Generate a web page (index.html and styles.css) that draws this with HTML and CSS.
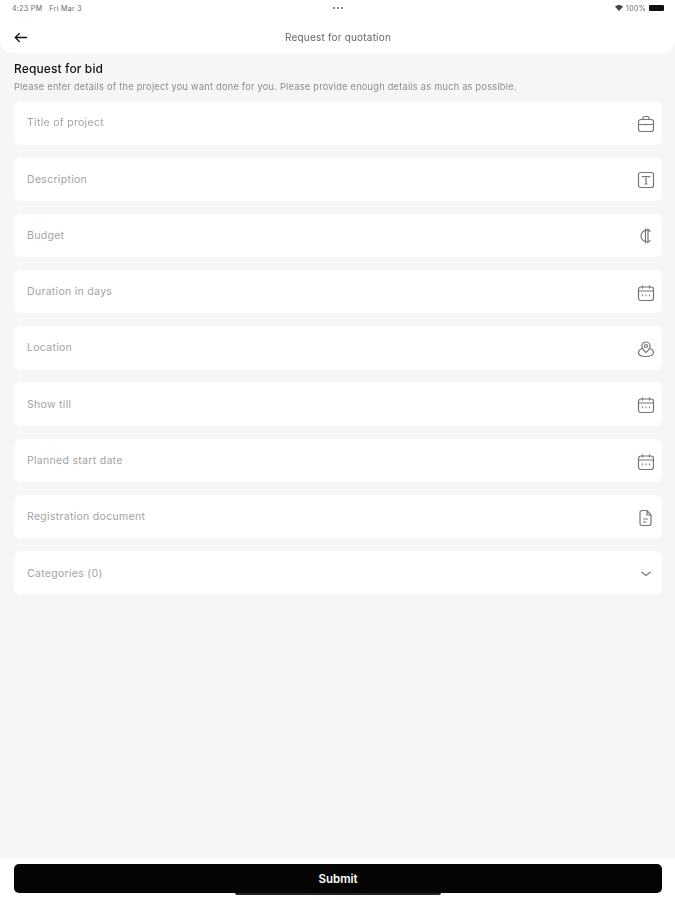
FILE: index.html
```html
<!DOCTYPE html>
<html lang="en">
<head>
    <meta charset="UTF-8">
    <meta name="viewport" content="width=device-width, initial-scale=1.0">
    <title>Request for quotation</title>
    <link rel="stylesheet" href="styles.css">
</head>
<body>
    <header class="top">
        <div class="status">
            <div class="status-time">4:23 PM&nbsp;&nbsp; Fri Mar 3</div>
            <div class="status-dots"><span></span><span></span><span></span></div>
            <div class="status-right">
                <svg class="wifi" viewBox="0 0 12 9"><path d="M6 9 0 2.6C3.5-.8 8.500-.8 12 2.600z"/></svg>
                <span>100%</span>
                <span class="battery"></span>
            </div>
        </div>
        <div class="nav">
            <svg class="back" viewBox="0 0 16 12"><path d="M15 6H2M6.500 1 1.500 6l5 5"/></svg>
            <div class="nav-title">Request for quotation</div>
        </div>
    </header>

    <main>
        <h1>Request for bid</h1>
        <p class="intro">Please enter details of the project you want done for you. Please provide enough details as much as possible.</p>

        <div class="fields">
            <div class="field">
                <span>Title of project</span>
                <svg class="icon" viewBox="0 0 18 18"><rect x="1.500" y="4.500" width="15" height="12" rx="2.500"/><path d="M6 4.500V3a1.500 1.500 0 0 1 1.500-1.500h3A1.500 1.500 0 0 1 12 3v1.500M1.500 9.500h15M9 10.500v.5"/></svg>
            </div>
            <div class="field">
                <span>Description</span>
                <svg class="icon" viewBox="0 0 18 18"><rect x="1.500" y="1.500" width="15" height="15" rx="2"/><path d="M5.500 6.500V5.500h7v1M9 5.500v7.500M7.500 13h3"/></svg>
            </div>
            <div class="field">
                <span>Budget</span>
                <svg class="icon" viewBox="0 0 18 18"><path d="M13.500 4.500A5.800 5.800 0 1 0 13.500 13.500M8.500 1.500v15M11 1.500v15"/></svg>
            </div>
            <div class="field">
                <span>Duration in days</span>
                <svg class="icon" viewBox="0 0 18 18"><use href="#cal"/></svg>
            </div>
            <div class="field">
                <span>Location</span>
                <svg class="icon" viewBox="0 0 18 18"><path d="M5 8.500C2.800 9.500 1.500 10.800 1.500 12.500c0 2.500 3 4 7.500 4s7.500-1.500 7.500-4c0-1.700-1.300-3-3.500-4"/><path d="M9 12.500C6.500 10.500 5 8.500 5 6a4 4 0 0 1 8 0c0 2.500-1.500 4.500-4 6.500z"/><circle cx="9" cy="6" r="1.500"/></svg>
            </div>
            <div class="field">
                <span>Show till</span>
                <svg class="icon" viewBox="0 0 18 18"><use href="#cal"/></svg>
            </div>
            <div class="field">
                <span>Planned start date</span>
                <svg class="icon" viewBox="0 0 18 18"><use href="#cal"/></svg>
            </div>
            <div class="field">
                <span>Registration document</span>
                <svg class="icon" viewBox="0 0 18 18"><path d="M5 1.500h5l4 4.500v8.500a2 2 0 0 1-2 2H5a2 2 0 0 1-2-2v-11a2 2 0 0 1 2-2zM10 1.500V6h4M6 10h5M6 13h3.500"/></svg>
            </div>
            <div class="field">
                <span>Categories (0)</span>
                <svg class="icon chev" viewBox="0 0 18 18"><path d="M4.500 7 9 10.500 13.500 7"/></svg>
            </div>
        </div>
    </main>

    <footer class="bottom">
        <button class="submit">Submit</button>
        <div class="home"></div>
    </footer>

    <svg class="defs" width="0" height="0">
        <symbol id="cal" viewBox="0 0 18 18">
            <rect x="1.500" y="3" width="15" height="13.500" rx="2.500"/>
            <path d="M1.500 7h15M5.500 1.500v3M12.500 1.500v3"/>
            <path class="cal-dots" d="M5 11.300h1M8.500 11.300h1M12 11.300h1"/>
        </symbol>
    </svg>
</body>
</html>
```

FILE: styles.css
```css
* {
    box-sizing: border-box;
    margin: 0;
    padding: 0;
}

body {
    width: 675px;
    height: 900px;
    overflow: hidden;
    display: flex;
    flex-direction: column;
    background: #f6f6f6;
    font-family: Inter, "Liberation Sans", sans-serif;
    color: #111;
    filter: blur(0.55px);
}

.top {
    height: 53px;
    background: #fff;
    border-radius: 0 0 13px 13px;
    padding: 0 11px 0 12px;
}

.status {
    height: 16px;
    display: grid;
    grid-template-columns: 1fr auto 1fr;
    align-items: center;
    font-size: 7px;
    letter-spacing: 0.35px;
    color: #666;
}

.status-dots {
    display: flex;
    gap: 1.500px;
}

.status-dots span {
    width: 2.500px;
    height: 2px;
    border-radius: 50%;
    background: #666;
}

.status-right {
    display: flex;
    justify-content: flex-end;
    align-items: center;
    gap: 3px;
}

.wifi {
    width: 8px;
    height: 6px;
    fill: #444;
}

.battery {
    width: 15px;
    height: 6px;
    background: #111;
    border-radius: 1px;
}

.nav {
    height: 37px;
    position: relative;
    display: flex;
    align-items: center;
    justify-content: center;
    padding-top: 5px;
}

.back {
    position: absolute;
    left: 2px;
    top: 16px;
    width: 14px;
    height: 11px;
    fill: none;
    stroke: #111;
    stroke-width: 1.600;
}

.nav-title {
    font-size: 10px;
    letter-spacing: 0.2px;
    color: #666;
}

main {
    flex: 1;
    padding: 9px 13px 0 14px;
}

h1 {
    font-size: 12px;
    font-weight: 500;
    line-height: 14px;
    letter-spacing: 0.12px;
    color: #111;
}

.intro {
    font-size: 9.200px;
    line-height: 12px;
    letter-spacing: 0.255px;
    margin-top: 5px;
    color: #8c8c8c;
}

.fields {
    display: flex;
    flex-direction: column;
    gap: 12.800px;
    margin-top: 8px;
}

.field {
    height: 43.500px;
    background: #fff;
    border-radius: 7px;
    padding: 0 7px 0 13px;
    display: flex;
    align-items: center;
    justify-content: space-between;
    font-size: 10.500px;
    letter-spacing: 0.3px;
    color: #a3a3a3;
}

.icon {
    width: 18px;
    height: 18px;
    fill: none;
    stroke: #767676;
    stroke-width: 1.200;
    margin-top: 2px;
}

.cal-dots {
    stroke-width: 1.800;
}

.chev {
    stroke-width: 1.300;
}

.defs {
    position: absolute;
}

.bottom {
    height: 42px;
    background: #fff;
    padding: 6px 13px 0 14px;
    position: relative;
}

.submit {
    display: block;
    width: 100%;
    height: 29px;
    background: #050505;
    color: #fff;
    border: none;
    border-radius: 5px;
    font-family: inherit;
    font-size: 11.500px;
    font-weight: 600;
}

.home {
    position: absolute;
    left: 235px;
    top: 35px;
    width: 206px;
    height: 2px;
    background: #222;
    border-radius: 0 0 2px 2px;
}
```
